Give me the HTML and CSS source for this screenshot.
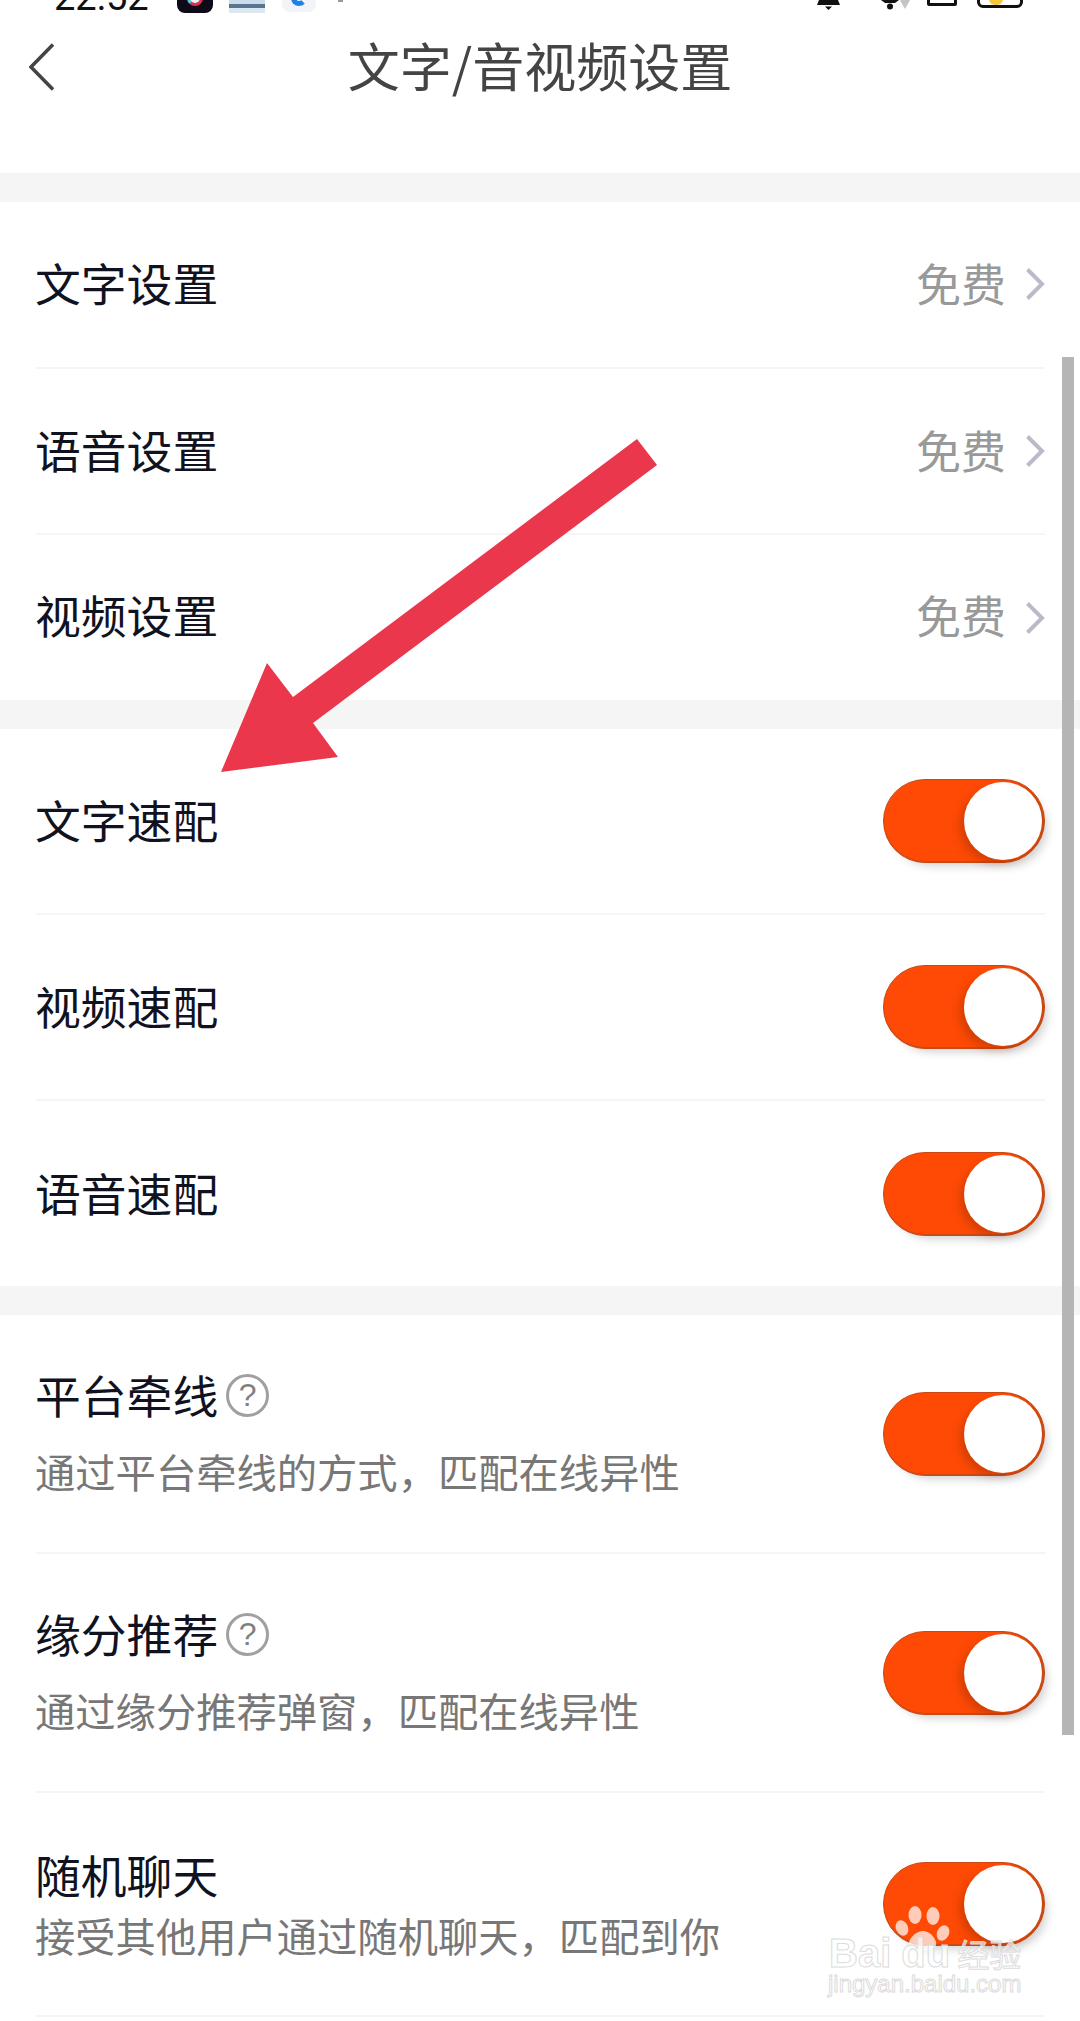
FILE: index.html
```html
<!DOCTYPE html>
<html lang="zh-CN">
<head>
<meta charset="utf-8">
<title>文字/音视频设置</title>
<link rel="stylesheet" href="styles.css">
</head>
<body>
<div class="page">
  <div class="status">
    <span class="time">22:52</span>
    <span class="app app-tiktok"><span class="app-eye"></span></span>
    <span class="app app-photo"></span>
    <span class="app app-blue"><span class="app-c"></span></span>
    <span class="dot"></span>
    <span class="spacer"></span>
    <svg class="st-bell" width="23" height="10" viewBox="0 0 23 10"><path d="M2 0h19l2 5H0zM8 6.500h7L11.500 10z" fill="#111"/></svg>
    <svg class="st-wifi" width="31" height="10" viewBox="0 0 31 10"><path d="M0 0h18l-4 3H4z" fill="#111"/><circle cx="9" cy="6.500" r="3" fill="#111"/><path d="M19 0h10l-1 2-4 7-4-7z" fill="#c4c4c4"/></svg>
    <span class="st-batt1"></span>
    <span class="st-batt2"><span class="st-fill"></span></span>
  </div>
  <header class="nav">
    <svg class="back" width="26" height="48" viewBox="0 0 26 48"><path d="M24 1.500 2 24l22 22.500" fill="none" stroke="#444" stroke-width="3.500"/></svg>
    <h1 class="title">文字/音视频设置</h1>
  </header>

  <div class="band"></div>
  <section>
    <div class="row row-link"><span class="name">文字设置</span><span class="value">免费</span><svg class="chev" width="20" height="34" viewBox="0 0 20 34"><path d="M2.500 2.500 17 17 2.500 31.500" fill="none" stroke="#b9bbc8" stroke-width="4"/></svg></div>
    <div class="row row-link"><span class="name">语音设置</span><span class="value">免费</span><svg class="chev" width="20" height="34" viewBox="0 0 20 34"><path d="M2.500 2.500 17 17 2.500 31.500" fill="none" stroke="#b9bbc8" stroke-width="4"/></svg></div>
    <div class="row row-link row-last"><span class="name">视频设置</span><span class="value">免费</span><svg class="chev" width="20" height="34" viewBox="0 0 20 34"><path d="M2.500 2.500 17 17 2.500 31.500" fill="none" stroke="#b9bbc8" stroke-width="4"/></svg></div>
  </section>

  <div class="band"></div>
  <section>
    <div class="row row-switch"><span class="name">文字速配</span><span class="toggle"><span class="knob"></span></span></div>
    <div class="row row-switch"><span class="name">视频速配</span><span class="toggle"><span class="knob"></span></span></div>
    <div class="row row-switch row-last"><span class="name">语音速配</span><span class="toggle"><span class="knob"></span></span></div>
  </section>

  <div class="band"></div>
  <section>
    <div class="row row-detail">
      <div class="info">
        <div class="name-line"><span class="name">平台牵线</span><span class="help">?</span></div>
        <div class="desc">通过平台牵线的方式&#xFF0C;匹配在线异性</div>
      </div>
      <span class="toggle"><span class="knob"></span></span>
    </div>
    <div class="row row-detail">
      <div class="info">
        <div class="name-line"><span class="name">缘分推荐</span><span class="help">?</span></div>
        <div class="desc">通过缘分推荐弹窗&#xFF0C;匹配在线异性</div>
      </div>
      <span class="toggle"><span class="knob"></span></span>
    </div>
    <div class="row row-detail row-tight">
      <div class="info">
        <div class="name-line"><span class="name">随机聊天</span></div>
        <div class="desc">接受其他用户通过随机聊天&#xFF0C;匹配到你</div>
      </div>
      <span class="toggle"><span class="knob"></span></span>
    </div>
  </section>

  <div class="scrollbar"></div>

  <svg class="arrow" width="1080" height="2021" viewBox="0 0 1080 2021"><polygon points="637,439 657,465 313,723 338,757 221,772 267,663 293,697" fill="#ea374c"/></svg>

  <div class="watermark">
    <svg class="paw" width="64" height="48" viewBox="0 0 64 48"><g fill="#fff" fill-opacity=".72"><ellipse cx="25" cy="11" rx="6.500" ry="9"/><ellipse cx="43" cy="12" rx="6.500" ry="9"/><ellipse cx="12" cy="24" rx="6" ry="8" transform="rotate(-25 12 24)"/><ellipse cx="53" cy="29" rx="6" ry="8" transform="rotate(25 53 29)"/><path d="M33 27c6 0 11 5 13 11 1 6-4 9-13 9s-15-3-14-9c2-6 8-11 14-11z"/></g></svg>
    <div class="wm-brand"><span class="wm-bai">Bai</span><span class="wm-du">du</span><span class="wm-cn">经验</span></div>
    <div class="wm-url">jingyan.baidu.com</div>
  </div>
</div>
</body>
</html>
```
FILE: styles.css
```css
* { box-sizing: border-box; }
html, body { margin: 0; padding: 0; background: #fff; }
.page {
  position: relative;
  width: 1080px;
  height: 2021px;
  overflow: hidden;
  background: #fff;
  font-family: "Noto Sans CJK SC", "Noto Sans", sans-serif;
}

/* status bar, cropped by the top of the screenshot */
.status {
  height: 14px;
  padding: 0 57px 0 54px;
  display: flex;
  align-items: flex-end;
  overflow: hidden;
}
.time {
  font-family: Roboto, sans-serif;
  font-size: 38px;
  line-height: 38px;
  margin-bottom: -2px;
  width: 123px;
  flex: none;
  color: #111;
}
.app { width: 36px; height: 36px; border-radius: 8px; margin: 0 16px 1px 0; display: flex; align-items: flex-end; justify-content: center; overflow: hidden; flex: none; }
.app-tiktok { background: #0e0a18; }
.app-eye { width: 16px; height: 16px; margin-bottom: 7px; border-radius: 50%; background: #e8f4f6; border: 3px solid #e03050; border-left-color: #40d0e0; }
.app-photo { background: linear-gradient(#3c5878 0 60%, #c9dcec 60% 75%, #5a7590 75% 85%, #dbe8f2 85%); border-radius: 0; }
.app-blue { background: #f2f4f8; margin: 0 0 2px 1px; width: 34px; }
.app-c { width: 16px; height: 16px; margin-bottom: 6px; border-radius: 50%; border: 5px solid #1e82e8; border-right-color: transparent; }
.dot { width: 5px; height: 2px; background: #999; align-self: flex-start; margin-left: 22px; }
.spacer { flex: 1; }
.st-bell { margin: 0 41px 4px 0; }
.st-wifi { margin: 0 15px 4px 0; }
.st-batt1 { width: 30px; height: 20px; border: 3px solid #111; border-radius: 2px; margin: 0 20px 8px 0; }
.st-batt2 { width: 46px; height: 20px; border: 3px solid #111; border-radius: 6px; margin-bottom: 6px; display: flex; overflow: hidden; padding-left: 9px; }
.st-fill { width: 14px; height: 14px; background: #f8c63a; border-radius: 0 0 6px 6px; }

/* nav */
.nav {
  height: 159px;
  padding: 29px 0 0 29px;
  position: relative;
}
.back { display: block; }
.title {
  position: absolute;
  left: 0;
  right: 0;
  top: 21px;
  margin: 0;
  text-align: center;
  font-size: 52px;
  line-height: 60px;
  font-weight: 400;
  color: #444;
}

.band { height: 29px; background: #f5f5f5; }

.row {
  margin: 0 35px 0 36px;
  display: flex;
  align-items: center;
  border-bottom: 2px solid #f5f5f5;
}
.row-last { border-bottom: 0; }
.row-link { height: 166.500px; }
.row-link.row-last { height: 165px; }
.row-switch { height: 186px; }
.row-switch.row-last { height: 185px; }
.row-detail { height: 239px; }
.row-tight { height: 224px; }

.name { font-size: 45.800px; line-height: 60px; color: #10131f; font-weight: 400; margin-left: -1px; }
.row-link .name, .row-switch .name { flex: 1; padding-bottom: 4px; }
.value { font-size: 45px; line-height: 60px; color: #999; margin-right: 19px; padding-bottom: 2px; }
.row-link.row-last .name { padding-bottom: 7px; }
.row-link.row-last .value { padding-bottom: 5px; }
.chev { display: block; flex: none; }

.toggle {
  width: 162px;
  height: 84px;
  flex: none;
  display: flex;
  justify-content: flex-end;
  align-items: center;
  padding-right: 2px;
  border-radius: 42px;
  background: #ff4a05;
  border: 1px solid #c94a14;
  box-shadow: inset -2px 0 0 #c94a14, inset 0 -1px 0 #c94a14, 6px 7px 10px -4px rgba(0,0,0,.18);
  margin-left: auto;
}
.knob {
  width: 78px;
  height: 78px;
  border-radius: 50%;
  background: #fff;
  box-shadow: -6px 5px 10px -2px rgba(120,40,0,.35);
}

.info { flex: 1; display: flex; flex-direction: column; gap: 17px; margin-top: -2px; }
.name-line { display: flex; align-items: center; gap: 8px; }
.help {
  width: 43px;
  height: 43px;
  margin-top: 3px;
  border-radius: 50%;
  border: 3px solid #a0a0a0;
  color: #808080;
  font-size: 32px;
  line-height: 37px;
  text-align: center;
  font-family: "Liberation Sans", sans-serif;
}
.desc { font-size: 40.300px; line-height: 60px; color: #777; margin-left: -1px; }
.row-tight .info { gap: 0; margin-top: 0; }
.row-tight .desc { margin-top: 1px; }

/* overlays */
.scrollbar {
  position: absolute;
  left: 1062px;
  top: 357px;
  width: 12px;
  height: 1378px;
  background: #b5b5b5;
}
.arrow { position: absolute; left: 0; top: 0; pointer-events: none; }

.watermark {
  position: absolute;
  left: 826px;
  top: 1904px;
  width: 210px;
  height: 100px;
}
.paw { position: absolute; left: 64px; top: 0; }
.wm-brand {
  position: absolute;
  left: 3px;
  top: 24px;
  display: flex;
  align-items: baseline;
  font-family: "Liberation Sans", sans-serif;
  font-weight: 700;
  color: rgba(255,255,255,.6);
  -webkit-text-stroke: 1px #dcdcdc;
  white-space: nowrap;
}
.wm-bai { font-size: 40px; line-height: 50px; }
.wm-du { font-size: 40px; line-height: 50px; margin-left: 10px; }
.wm-cn { font-size: 32px; line-height: 50px; margin-left: 7px; font-family: "Noto Sans CJK SC", sans-serif; font-weight: 400; }
.wm-url {
  position: absolute;
  left: 2px;
  top: 64px;
  font-family: "Liberation Sans", sans-serif;
  font-size: 24px;
  line-height: 32px;
  color: rgba(255,255,255,.6);
  -webkit-text-stroke: 1px #dcdcdc;
  white-space: nowrap;
}
```
